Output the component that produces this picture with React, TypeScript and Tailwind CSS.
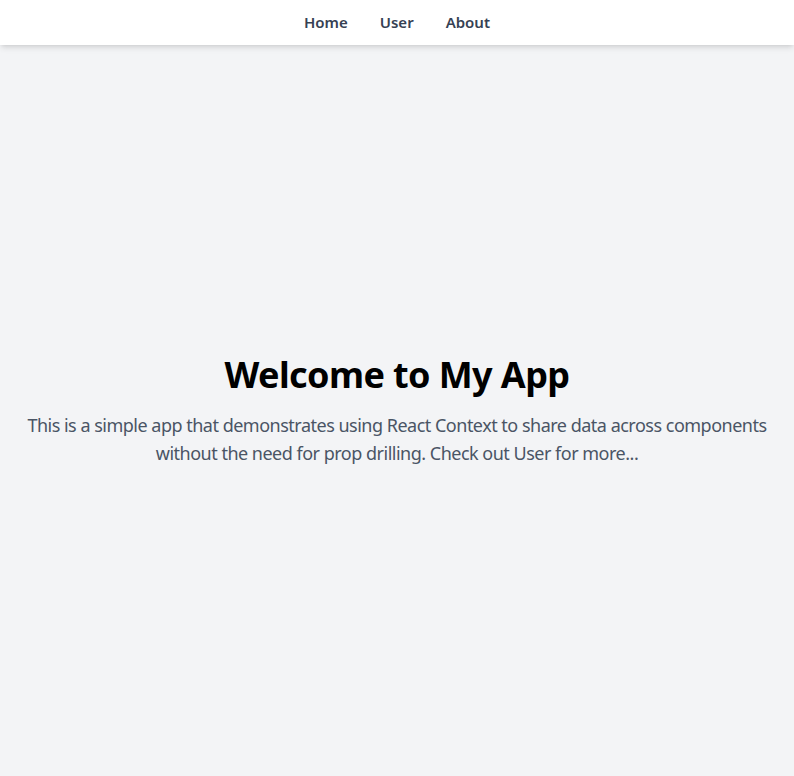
export default function App() {
  return (
    <div
      className="min-h-screen flex flex-col bg-gray-100"
      style={{ fontFamily: '"Noto Sans", "Open Sans", sans-serif' }}
    >
      <nav className="bg-white shadow-md h-[45px] flex items-center justify-center">
        <ul className="flex gap-8 text-[15px] font-semibold text-gray-700">
          <li>Home</li>
          <li>User</li>
          <li>About</li>
        </ul>
      </nav>
      <main className="flex-1 flex flex-col items-center justify-center px-4 text-center">
        <h1 className="text-4xl font-bold text-black mb-4 tracking-[-0.6px]">Welcome to My App</h1>
        <p className="text-lg leading-7 text-gray-600 tracking-[-0.5px]">
          This is a simple app that demonstrates using React Context to share data across components
          without the need for prop drilling. Check out User for more...
        </p>
      </main>
    </div>
  );
}
